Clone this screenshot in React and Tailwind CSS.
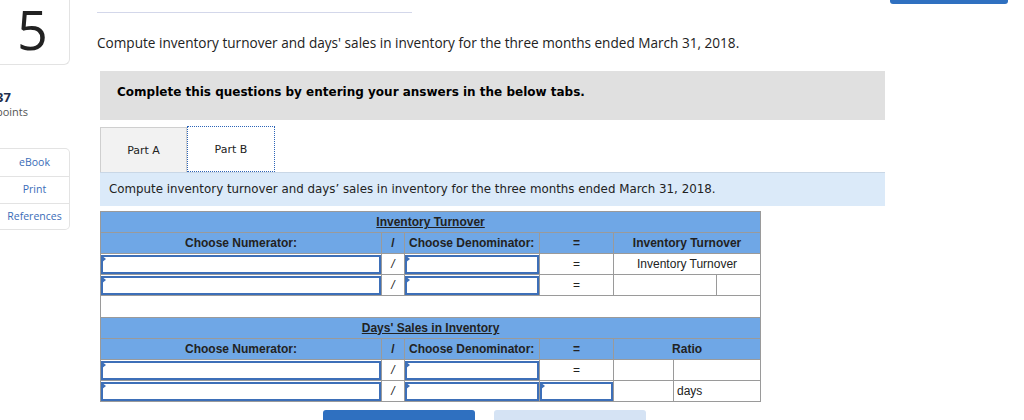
import React from "react";

const sans = { fontFamily: "'Open Sans', Lato, sans-serif" };
const verdana = { fontFamily: "'DejaVu Sans', Verdana, sans-serif" };

function InputCell({ className = "" }) {
  return (
    <div className={`relative h-[19px] border-2 border-[#3d6fb8] bg-white ${className}`}>
      <span className="absolute -left-[2px] -top-[2px] h-0 w-0 border-l-[5px] border-t-[4px] border-b-[4px] border-l-[#3d6fb8] border-t-transparent border-b-transparent" />
    </div>
  );
}

function SectionHeader({ title, last }) {
  return (
    <>
      <tr className="h-[21px] bg-[#6fa7e6]">
        <td colSpan={7} className="border border-[#9a9a9a] text-center font-bold underline">
          {title}
        </td>
      </tr>
      <tr className="h-[21px] bg-[#6fa7e6] font-bold">
        <td className="border border-[#9a9a9a] text-center">Choose Numerator:</td>
        <td className="border border-[#9a9a9a] text-center">/</td>
        <td className="border border-[#9a9a9a] pl-[4px]">Choose Denominator:</td>
        <td className="border border-[#9a9a9a] text-center">=</td>
        <td colSpan={3} className="border border-[#9a9a9a] text-center">{last}</td>
      </tr>
    </>
  );
}

function FormulaRow({ children, eqInput }) {
  return (
    <tr className="h-[21px] bg-white">
      <td className="border border-[#9a9a9a] p-0">
        <InputCell />
      </td>
      <td className="border border-[#9a9a9a] text-center italic">/</td>
      <td className="border border-[#9a9a9a] p-0">
        <InputCell />
      </td>
      {eqInput ? (
        <td className="border border-[#9a9a9a] p-0">
          <InputCell />
        </td>
      ) : (
        <td className="border border-[#9a9a9a] text-center">=</td>
      )}
      {children}
    </tr>
  );
}

export default function App() {
  return (
    <div className="flex h-[420px] w-[1024px] overflow-hidden bg-white text-[#333]">
      {/* left rail */}
      <div className="w-[70px] shrink-0" style={sans}>
        <div className="flex h-[65px] w-[70px] items-start justify-center rounded-br-[6px] border-b border-r border-[#e3e3e3] pr-[4px] pt-[4px]">
          <span className="text-[54px] leading-[50px] text-[#222]">5</span>
        </div>
        <div className="-ml-[4px] mt-[24px] text-[13px] font-bold leading-[16px] text-[#1f2f4f]">37</div>
        <div className="-ml-[4px] text-[11px] leading-[14px] text-[#555]">points</div>
        <div className="mt-[29px] w-[70px] rounded-r-[5px] border border-l-0 border-[#e3e3e3] text-center text-[10.5px] text-[#3a6cb8]">
          <div className="flex h-[28px] items-center justify-center border-b border-[#e3e3e3]">eBook</div>
          <div className="flex h-[27px] items-center justify-center border-b border-[#e3e3e3]">Print</div>
          <div className="flex h-[25px] items-center justify-center">References</div>
        </div>
      </div>

      {/* main */}
      <div className="ml-[27px] w-[788px] shrink-0">
        <div className="mt-[12px] h-px w-[315px] bg-[#d3d7ea]" />
        <p className="mt-[21px] text-[13.6px] leading-[18px] text-[#222]" style={sans}>
          Compute inventory turnover and days' sales in inventory for the three months ended March 31, 2018.
        </p>

        <div
          className="ml-[3px] mt-[19px] h-[49px] w-[785px] bg-[#e0e0e0] pl-[17px] pt-[12px] text-[12px] font-bold text-black"
          style={verdana}
        >
          Complete this questions by entering your answers in the below tabs.
        </div>

        <div className="ml-[3px] mt-[6px]" style={verdana}>
          <div className="flex items-end">
            <div className="flex h-[45px] w-[87px] items-center justify-center border border-b-0 border-[#cfcfcf] bg-[#f2f2f2] pt-[3px] text-[11px] text-[#222]">
              Part A
            </div>
            <div className="flex h-[46px] w-[88px] items-center justify-center border border-dotted border-[#2c64b8] bg-white pt-[3px] text-[11px] text-[#222]">
              Part B
            </div>
          </div>
          <div className="flex h-[34px] w-[785px] items-center border-t border-[#c9d7e6] bg-[#dbeaf9] pl-[9px] text-[11.85px] text-[#222]">
            Compute inventory turnover and days’ sales in inventory for the three months ended March 31, 2018.
          </div>
        </div>

        <table
          className="ml-[3px] mt-[5px] w-[660px] table-fixed border-collapse border border-[#9a9a9a] text-[12px] text-[#222]"
          style={{ fontFamily: "'Liberation Sans', Arial, sans-serif" }}
        >
          <colgroup>
            <col className="w-[281px]" />
            <col className="w-[23px]" />
            <col className="w-[135px]" />
            <col className="w-[74px]" />
            <col className="w-[60px]" />
            <col className="w-[43px]" />
            <col className="w-[44px]" />
          </colgroup>
          <tbody>
            <SectionHeader title="Inventory Turnover" last="Inventory Turnover" />
            <FormulaRow>
              <td colSpan={3} className="border border-[#9a9a9a] text-center">Inventory Turnover</td>
            </FormulaRow>
            <FormulaRow>
              <td colSpan={2} className="border border-[#9a9a9a]" />
              <td className="border border-[#9a9a9a]" />
            </FormulaRow>
            <tr className="h-[22px] bg-white">
              <td colSpan={7} className="border border-[#9a9a9a]" />
            </tr>
            <SectionHeader title="Days' Sales in Inventory" last="Ratio" />
            <FormulaRow>
              <td className="border border-[#9a9a9a]" />
              <td colSpan={2} className="border border-[#9a9a9a]" />
            </FormulaRow>
            <FormulaRow eqInput>
              <td className="border border-[#9a9a9a]" />
              <td colSpan={2} className="border border-[#9a9a9a] pl-[3px]">days</td>
            </FormulaRow>
          </tbody>
        </table>

        <div className="ml-[226px] mt-[8px] flex gap-[19px]">
          <div className="h-[12px] w-[152px] rounded-t-[3px] bg-[#2f70c0]" />
          <div className="h-[12px] w-[152px] rounded-t-[3px] bg-[#d5e3f4]" />
        </div>
      </div>

      {/* right */}
      <div className="ml-[5px] w-[118px] shrink-0">
        <div className="h-[4px] w-[118px] rounded-b-[3px] bg-[#2f70c0]" />
      </div>
    </div>
  );
}
